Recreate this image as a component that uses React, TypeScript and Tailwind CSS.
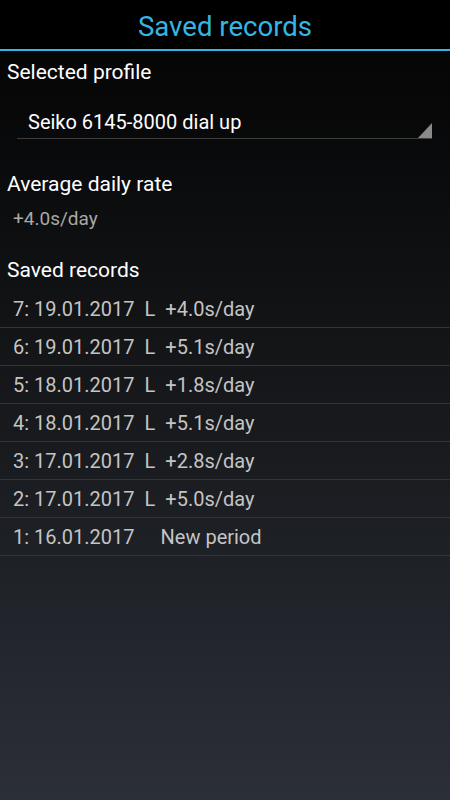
const records = [
  { n: 7, date: '19.01.2017', side: 'L', rate: '+4.0s/day' },
  { n: 6, date: '19.01.2017', side: 'L', rate: '+5.1s/day' },
  { n: 5, date: '18.01.2017', side: 'L', rate: '+1.8s/day' },
  { n: 4, date: '18.01.2017', side: 'L', rate: '+5.1s/day' },
  { n: 3, date: '17.01.2017', side: 'L', rate: '+2.8s/day' },
  { n: 2, date: '17.01.2017', side: 'L', rate: '+5.0s/day' },
  { n: 1, date: '16.01.2017', side: '', rate: 'New period' },
]

export default function App() {
  return (
    <div
      className="w-[450px] h-[800px] overflow-hidden bg-gradient-to-b from-[#040404] via-[#16181b] to-[#2b2f38] font-['Roboto',sans-serif]"
    >
      <header className="h-[49px] flex items-center justify-center bg-black">
        <h1 className="text-[27.6px] leading-none text-[#33b5e5] pt-[4px]">Saved records</h1>
      </header>
      <div className="h-[2px] bg-[#33b5e5]" />

      <div className="h-[44px] flex items-center px-[7px] text-[21px] text-white">Selected profile</div>

      <div className="mx-[17px] mr-[18px] h-[44px] flex items-end relative border-b border-[#3d3d3d]">
        <span className="pl-[11px] pb-[4px] text-[20px] leading-[24px] text-white">Seiko 6145-8000 dial up</span>
        <svg className="absolute right-0 bottom-0" width="14" height="15" viewBox="0 0 14 15">
          <polygon points="14,0 14,15 0,15" fill="#8a8a8a" />
        </svg>
      </div>

      <div className="mt-[33px] px-[7px] text-[21px] leading-[24px] text-white">Average daily rate</div>
      <div className="mt-[11px] px-[13px] text-[19px] leading-[24px] text-[#a8a8a8]">+4.0s/day</div>

      <div className="mt-[27px] px-[7px] text-[21px] leading-[24px] text-white">Saved records</div>

      <ul className="mt-[8px]">
        {records.map((r) => (
          <li
            key={r.n}
            className="h-[38px] flex items-center px-[13px] border-b border-[#313439] text-[20px] text-[#c4c4c4]"
          >
            <span>{r.n}: {r.date}</span>
            {r.side ? (
              <>
                <span className="ml-[10px]">{r.side}</span>
                <span className="ml-[10px]">{r.rate}</span>
              </>
            ) : (
              <span className="ml-[26px]">{r.rate}</span>
            )}
          </li>
        ))}
      </ul>
    </div>
  )
}
